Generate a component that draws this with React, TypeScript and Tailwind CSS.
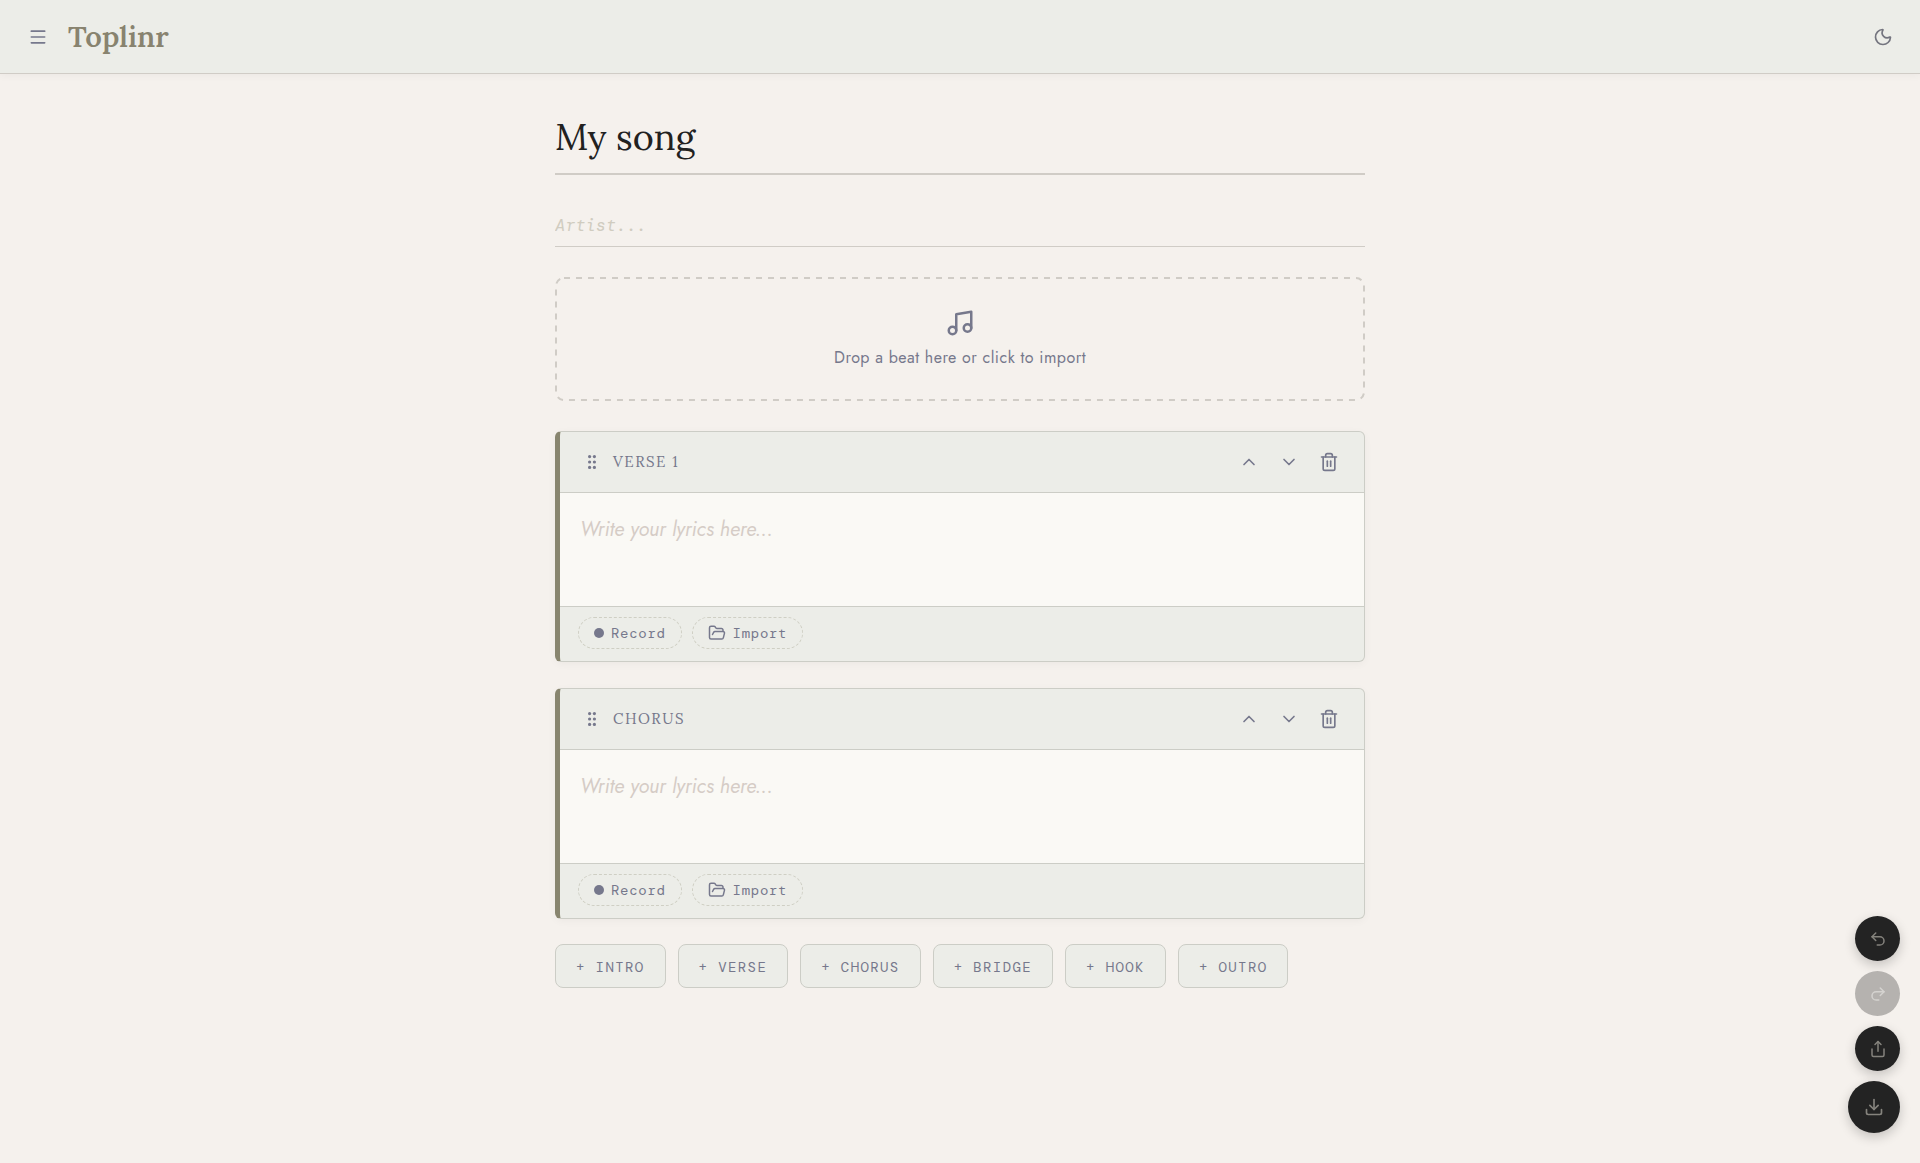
import { useState } from "react";
import {
    ChevronDown,
    ChevronUp,
    Download,
    FolderOpen,
    Menu,
    Moon,
    Music,
    Redo2,
    Share,
    Trash2,
    Undo2,
} from "lucide-react";

type Section = { id: number; title: string; lyrics: string };

const SECTION_TYPES = ["Intro", "Verse", "Chorus", "Bridge", "Hook", "Outro"];

const SERIF = "font-['Lora','Liberation_Serif',serif]";
const MONO = "font-['DM_Mono','Liberation_Mono',monospace]";

function Header() {
    return (
        <header className="flex items-center justify-between border-b border-[#d0ccc6] bg-[#ecede8] pr-[23px] pl-6 py-4 shadow-[0_2px_8px_rgba(0,0,0,0.04)]">
            <div className="flex items-center gap-3">
                <button aria-label="Menu" className="flex size-7 items-center justify-center text-[#76788c]">
                    <Menu size={20} strokeWidth={2} />
                </button>
                <h1 className={`${SERIF} pl-1 text-[29px] leading-[41px] font-semibold text-[#88836f]`}>Toplinr</h1>
            </div>
            <button aria-label="Dark mode" className="flex size-7 items-center justify-center text-[#74757f]">
                <Moon size={20} strokeWidth={2} />
            </button>
        </header>
    );
}

function DropZone() {
    return (
        <button className="relative flex h-[124px] w-full flex-col items-center justify-center gap-2 text-[#76788c]">
            {/* evenly spaced dashes, which a CSS dashed border doesn't give */}
            <svg className="absolute inset-0 size-full overflow-visible p-px" aria-hidden="true">
                <rect
                    width="100%"
                    height="100%"
                    rx="8"
                    fill="none"
                    stroke="#d0ccc6"
                    strokeWidth="2"
                    strokeDasharray="6 6"
                />
            </svg>
            <Music size={30} strokeWidth={2} />
            <span className="text-base leading-6 tracking-[0.03em]">Drop a beat here or click to import</span>
        </button>
    );
}

function DragHandle() {
    return (
        <svg width="8" height="14" viewBox="0 0 8 14" fill="currentColor" aria-hidden="true">
            <circle cx="1.6" cy="1.6" r="1.6" />
            <circle cx="6.4" cy="1.6" r="1.6" />
            <circle cx="1.6" cy="7" r="1.6" />
            <circle cx="6.4" cy="7" r="1.6" />
            <circle cx="1.6" cy="12.4" r="1.6" />
            <circle cx="6.4" cy="12.4" r="1.6" />
        </svg>
    );
}

type SectionCardProps = {
    section: Section;
    onChange: (lyrics: string) => void;
    onMove: (step: number) => void;
    onDelete: () => void;
};

function SectionCard({ section, onChange, onMove, onDelete }: SectionCardProps) {
    const iconButton = "flex size-8 items-center justify-center";
    const pill = `${MONO} flex h-8 items-center gap-[7px] rounded-full border border-dashed border-[#cfcfc4] px-[15px] text-sm tracking-wider`;

    return (
        <section className="overflow-hidden rounded-md border border-l-[5px] border-[#cccdc6] border-l-[#88856f] bg-[#ecede8] text-[#76788c] shadow-[0_2px_8px_rgba(0,0,0,0.04)]">
            <div className="flex h-[61px] items-center justify-between border-b border-[#cccdc6] pr-[19px] pl-7">
                <div className="flex items-center gap-[17px]">
                    <DragHandle />
                    <h2 className={`${SERIF} text-[15px] tracking-widest uppercase`}>{section.title}</h2>
                </div>
                <div className="flex items-center gap-2">
                    <button aria-label="Move up" className={iconButton} onClick={() => onMove(-1)}>
                        <ChevronUp size={20} strokeWidth={2} />
                    </button>
                    <button aria-label="Move down" className={iconButton} onClick={() => onMove(1)}>
                        <ChevronDown size={20} strokeWidth={2} />
                    </button>
                    <button aria-label="Delete section" className={iconButton} onClick={onDelete}>
                        <Trash2 size={20} strokeWidth={2} />
                    </button>
                </div>
            </div>
            <textarea
                aria-label={`${section.title} lyrics`}
                value={section.lyrics}
                onChange={(e) => onChange(e.target.value)}
                placeholder="Write your lyrics here..."
                className="block h-[113px] w-full resize-none bg-[#faf9f5] p-5 text-xl leading-[34px] text-[#22211f] outline-none placeholder:text-[#d5ccc6] placeholder:italic"
            />
            <div className="flex items-center gap-2.5 border-t border-[#cccdc6] px-[18px] pt-2.5 pb-3">
                <button className={pill}>
                    <span className="size-2.5 rounded-full bg-[#76788c]" />
                    Record
                </button>
                <button className={pill}>
                    <FolderOpen size={18} strokeWidth={2} />
                    Import
                </button>
            </div>
        </section>
    );
}

function FloatingActions() {
    const round =
        "flex items-center justify-center rounded-full bg-[#232323] text-[#85837d] shadow-[0_4px_12px_rgba(0,0,0,0.2)]";

    return (
        <div className="fixed right-5 bottom-[30px] flex flex-col items-end gap-2.5">
            <button aria-label="Undo" className={`${round} size-[45px]`}>
                <Undo2 size={18} strokeWidth={2} />
            </button>
            <button
                aria-label="Redo"
                disabled
                className="flex size-[45px] items-center justify-center rounded-full bg-[#b5b2af] text-[#d5d3d0]"
            >
                <Redo2 size={18} strokeWidth={2} />
            </button>
            <button aria-label="Share" className={`${round} size-[45px]`}>
                <Share size={18} strokeWidth={2} />
            </button>
            <button aria-label="Download" className={`${round} size-[52px]`}>
                <Download size={20} strokeWidth={2} />
            </button>
        </div>
    );
}

export default function App() {
    const [title, setTitle] = useState("My song");
    const [artist, setArtist] = useState("");
    const [sections, setSections] = useState<Section[]>([
        { id: 1, title: "Verse 1", lyrics: "" },
        { id: 2, title: "Chorus", lyrics: "" },
    ]);

    const updateLyrics = (id: number, lyrics: string) =>
        setSections(sections.map((s) => (s.id === id ? { ...s, lyrics } : s)));

    const moveSection = (index: number, step: number) => {
        const target = index + step;
        if (target < 0 || target >= sections.length) return;
        const next = [...sections];
        [next[index], next[target]] = [next[target], next[index]];
        setSections(next);
    };

    const addSection = (type: string) => setSections([...sections, { id: Date.now(), title: type, lyrics: "" }]);

    return (
        <div className="min-h-screen bg-[#f5f1ed] font-['Jost','Lato',sans-serif]">
            <Header />
            <main className="mx-auto max-w-[858px] px-6 pt-9 pb-24">
                <input
                    aria-label="Song title"
                    value={title}
                    onChange={(e) => setTitle(e.target.value)}
                    className={`${SERIF} block h-[65px] w-full border-b-2 border-[#d0ccc6] pb-2.5 text-4xl text-[#22211f] outline-none`}
                />
                <input
                    aria-label="Artist"
                    value={artist}
                    onChange={(e) => setArtist(e.target.value)}
                    placeholder="Artist..."
                    className={`${MONO} mt-7 block h-11 w-full border-b border-[#d0ccc6] text-[17px] text-[#22211f] outline-none placeholder:text-[#d0ccc0] placeholder:italic`}
                />
                <div className="mt-[30px]">
                    <DropZone />
                </div>
                <div className="mt-[30px] flex flex-col gap-[26px]">
                    {sections.map((section, index) => (
                        <SectionCard
                            key={section.id}
                            section={section}
                            onChange={(lyrics) => updateLyrics(section.id, lyrics)}
                            onMove={(step) => moveSection(index, step)}
                            onDelete={() => setSections(sections.filter((s) => s.id !== section.id))}
                        />
                    ))}
                </div>
                <div className="mt-[25px] flex flex-wrap gap-3">
                    {SECTION_TYPES.map((type) => (
                        <button
                            key={type}
                            onClick={() => addSection(type)}
                            className={`${MONO} h-11 rounded-lg border border-[#cccdc6] bg-[#ecede8] px-5 pt-0.5 text-sm tracking-widest text-[#76788c] uppercase`}
                        >
                            + {type}
                        </button>
                    ))}
                </div>
            </main>
            <FloatingActions />
        </div>
    );
}
